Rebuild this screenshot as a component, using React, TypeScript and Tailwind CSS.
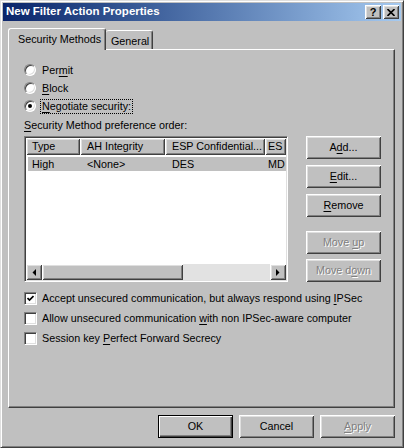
import React from "react";

const raised =
  "bg-[#c0c0c0] shadow-[inset_1px_1px_#fff,inset_-1px_-1px_#404040,inset_2px_2px_#dfdfdf,inset_-2px_-2px_#808080]";
const sunken =
  "border border-t-[#808080] border-l-[#808080] border-b-white border-r-white shadow-[inset_1px_1px_#404040,inset_-1px_-1px_#dfdfdf]";

function U({ c }: { c: string }) {
  return <span className="underline underline-offset-[2px]">{c}</span>;
}

function Btn({
  children,
  disabled,
  primary,
}: {
  children: React.ReactNode;
  disabled?: boolean;
  primary?: boolean;
}) {
  return (
    <div
      className={`flex h-[23px] w-[75px] items-center justify-center leading-none ${
        primary
          ? "border border-black bg-[#c0c0c0] shadow-[inset_1px_1px_#fff,inset_-1px_-1px_#404040,inset_-2px_-2px_#808080]"
          : raised
      } ${disabled ? "text-[#808080] [text-shadow:1px_1px_0_#fff]" : "text-black"}`}
    >
      <span className="whitespace-pre">{children}</span>
    </div>
  );
}

function Radio({ checked }: { checked?: boolean }) {
  return (
    <span className={`flex h-[12px] w-[12px] shrink-0 items-center justify-center rounded-full bg-white ${sunken}`}>
      {checked && <span className="h-[4px] w-[4px] rounded-full bg-black" />}
    </span>
  );
}

function Check({ checked }: { checked?: boolean }) {
  return (
    <span className={`flex h-[13px] w-[13px] shrink-0 items-center justify-center bg-white ${sunken}`}>
      {checked && (
        <svg width="7" height="7" viewBox="0 0 7 7">
          <path d="M0.5 3 L2.5 5 L6.5 1" fill="none" stroke="#000" strokeWidth="1.7" />
        </svg>
      )}
    </span>
  );
}

function Arrow({ dir }: { dir: "left" | "right" }) {
  return (
    <div className={`flex h-[16px] w-[16px] shrink-0 items-center justify-center ${raised}`}>
      <svg width="4" height="7" viewBox="0 0 4 7">
        <polygon points={dir === "left" ? "4,0 4,7 0.5,3.5" : "0,0 0,7 3.5,3.5"} fill="#000" />
      </svg>
    </div>
  );
}

export default function App() {
  return (
    <div className="flex h-[448px] w-[404px] flex-col border border-t-[#dfdfdf] border-l-[#dfdfdf] border-r-[#404040] border-b-[#404040] bg-[#c0c0c0] p-[2px] font-['Liberation_Sans',Arial,sans-serif] text-[10.75px] text-black shadow-[inset_1px_1px_#fff,inset_-1px_-1px_#808080]">
      {/* title bar */}
      <div className="flex h-[18px] items-center bg-gradient-to-r from-[#0a246a] to-[#a6caf0] pl-[3px] pr-[2px]">
        <span className="flex-1 text-[11.5px] font-bold leading-none text-white">New Filter Action Properties</span>
        <div className={`flex h-[14px] w-[16px] items-center justify-center text-[11px] font-bold leading-none ${raised}`}>?</div>
        <div className={`ml-[2px] flex h-[14px] w-[16px] items-center justify-center ${raised}`}>
          <svg width="8" height="7" viewBox="0 0 8 7">
            <path d="M0.5 0 L7.5 7 M7.5 0 L0.5 7" stroke="#000" strokeWidth="1.6" />
          </svg>
        </div>
      </div>

      <div className="flex flex-1 flex-col pl-[5px] pr-[6px] pt-[7px]">
        {/* tabs */}
        <div className="flex h-[21px] items-end">
          <div className="relative z-10 -mb-px flex h-[22px] w-[98px] items-center rounded-t-[3px] border-l border-t border-r border-l-white border-t-white border-r-[#404040] bg-[#c0c0c0] pl-[9px] shadow-[inset_-1px_0_#808080]">
            Security Methods
          </div>
          <div className="flex h-[19px] w-[47px] items-center rounded-t-[3px] border-t border-r border-t-white border-r-[#404040] pl-[5px] pt-[2px] shadow-[inset_-1px_0_#808080]">
            General
          </div>
        </div>

        {/* panel */}
        <div className="flex h-[359px] flex-col border border-l-white border-t-white border-r-[#404040] border-b-[#404040] pl-[15px] pt-[11px] shadow-[inset_-1px_-1px_#808080]">
          <div className="flex flex-col">
            <div className="flex h-[18px] items-center">
              <Radio />
              <span className="ml-[6px]">
                Per<U c="m" />it
              </span>
            </div>
            <div className="flex h-[18px] items-center">
              <Radio />
              <span className="ml-[6px]">
                <U c="B" />lock
              </span>
            </div>
            <div className="flex h-[18px] items-center">
              <Radio checked />
              <span className="ml-[4px] border border-dotted border-black px-[1px] leading-[13px]">
                <U c="N" />egotiate security:
              </span>
            </div>
          </div>

          <div className="mt-[3px] flex h-[14px] items-center">
            <span>
              <U c="S" />ecurity Method preference order:
            </span>
          </div>

          <div className="mt-[4px] flex">
            {/* list view */}
            <div className={`flex h-[146px] w-[264px] flex-col bg-white p-px ${sunken}`}>
              <div className="flex h-[17px] shrink-0">
                {[
                  ["Type", "w-[54px] pl-[6px]"],
                  ["AH Integrity", "w-[85px] pl-[7px]"],
                  ["ESP Confidential...", "w-[100px] pl-[7px]"],
                  ["ES", "flex-1 pl-[3px]"],
                ].map(([t, c]) => (
                  <div key={t} className={`flex items-center overflow-hidden whitespace-nowrap leading-none ${c} ${raised}`}>
                    {t}
                  </div>
                ))}
              </div>
              <div className="ml-[2px] mt-[2px] flex h-[14px] items-center whitespace-nowrap bg-[#c0c0c0] leading-none">
                <span className="w-[52px] pl-[4px]">High</span>
                <span className="w-[85px] pl-[7px]">&lt;None&gt;</span>
                <span className="w-[100px] pl-[7px]">DES</span>
                <span className="flex-1 pl-[3px]">MD</span>
              </div>
              <div className="flex-1" />
              <div className="flex h-[16px]">
                <Arrow dir="left" />
                <div className={`w-[141px] ${raised}`} />
                <div className="flex-1 bg-[#e2e2e2]" />
                <Arrow dir="right" />
              </div>
            </div>

            {/* side buttons */}
            <div className="ml-[18px] flex flex-col">
              <Btn>
                A<U c="d" />d...
              </Btn>
              <div className="mt-[6px]">
                <Btn>
                  <U c="E" />dit...
                </Btn>
              </div>
              <div className="mt-[6px]">
                <Btn>
                  <U c="R" />emove
                </Btn>
              </div>
              <div className="mt-[14px]">
                <Btn disabled>
                  Move <U c="u" />p
                </Btn>
              </div>
              <div className="mt-[5px]">
                <Btn disabled>
                  Move d<U c="o" />wn
                </Btn>
              </div>
            </div>
          </div>

          <div className="mt-[6px] flex flex-col">
            <div className="flex h-[20px] items-center">
              <Check checked />
              <span className="ml-[5px]">
                Accept unsecured communication, but always respond using <U c="I" />PSec
              </span>
            </div>
            <div className="flex h-[20px] items-center">
              <Check />
              <span className="ml-[5px]">
                Allow unsecured communication <U c="w" />ith non IPSec-aware computer
              </span>
            </div>
            <div className="flex h-[20px] items-center">
              <Check />
              <span className="ml-[5px]">
                Session key <U c="P" />erfect Forward Secrecy
              </span>
            </div>
          </div>
        </div>

        {/* dialog buttons */}
        <div className="mt-[7px] flex justify-end gap-[6px]">
          <Btn primary>OK</Btn>
          <Btn>Cancel</Btn>
          <Btn disabled>
            <U c="A" />pply
          </Btn>
        </div>
      </div>
    </div>
  );
}
